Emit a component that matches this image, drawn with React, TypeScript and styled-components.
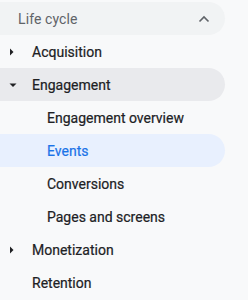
import React from "react";
import styled, { createGlobalStyle } from "styled-components";

const Global = createGlobalStyle`
  html, body { margin: 0; padding: 0; background: #f8f9fa; }
  body { font-family: Roboto, "Noto Sans", Arial, sans-serif; }
`;

const Nav = styled.nav`
  width: 248px;
  height: 300px;
  padding-top: 2px;
  box-sizing: border-box;
  display: flex;
  flex-direction: column;
  overflow: hidden;
`;

const Header = styled.div`
  width: 225px;
  height: 33px;
  box-sizing: border-box;
  background: #f1f3f4;
  border-radius: 0 17px 17px 0;
  display: flex;
  align-items: center;
  justify-content: space-between;
  padding: 0 15px 0 18px;
  font-size: 14px;
  color: #5f6368;
  letter-spacing: 0.1px;
`;

const Row = styled.div<{ $level: number; $active?: boolean; $open?: boolean }>`
  width: 225px;
  height: 33px;
  box-sizing: border-box;
  border-radius: 0 17px 17px 0;
  display: flex;
  align-items: center;
  padding-left: ${(p) => (p.$level === 2 ? 47 : 9)}px;
  font-size: 14px;
  font-weight: 400;
  letter-spacing: 0;
  -webkit-text-stroke: 0.2px currentColor;
  color: ${(p) => (p.$active ? "#1a73e8" : "#202124")};
  background: ${(p) => (p.$active ? "#e8f0fe" : p.$open ? "#e9eaed" : "transparent")};
`;

const Caret = styled.span`
  width: 23px;
  display: flex;
  align-items: center;
  justify-content: flex-start;
`;

const Right = () => (
  <svg width="6" height="8" viewBox="0 0 6 8"><path d="M1 0.5 L4.5 4 L1 7.5 Z" fill="#202124" /></svg>
);
const Down = () => (
  <svg width="8" height="6" viewBox="0 0 8 6"><path d="M0.5 1.5 L7.5 1.5 L4 5 Z" fill="#202124" /></svg>
);
const ChevronUp = () => (
  <svg width="12" height="8" viewBox="0 0 12 8">
    <path d="M1.5 6.5 L6 2 L10.5 6.5" fill="none" stroke="#5f6368" strokeWidth="1.6" />
  </svg>
);

type Item = { label: string; level: number; caret?: "right" | "down"; active?: boolean; open?: boolean };

const items: Item[] = [
  { label: "Acquisition", level: 1, caret: "right" },
  { label: "Engagement", level: 1, caret: "down", open: true },
  { label: "Engagement overview", level: 2 },
  { label: "Events", level: 2, active: true },
  { label: "Conversions", level: 2 },
  { label: "Pages and screens", level: 2 },
  { label: "Monetization", level: 1, caret: "right" },
  { label: "Retention", level: 1 },
];

export default function App() {
  return (
    <>
      <Global />
      <Nav>
        <Header>
          <span>Life cycle</span>
          <ChevronUp />
        </Header>
        {items.map((it) => (
          <Row key={it.label} $level={it.level} $active={it.active} $open={it.open}>
            {it.level === 1 && (
              <Caret>{it.caret === "right" ? <Right /> : it.caret === "down" ? <Down /> : null}</Caret>
            )}
            {it.label}
          </Row>
        ))}
      </Nav>
    </>
  );
}
